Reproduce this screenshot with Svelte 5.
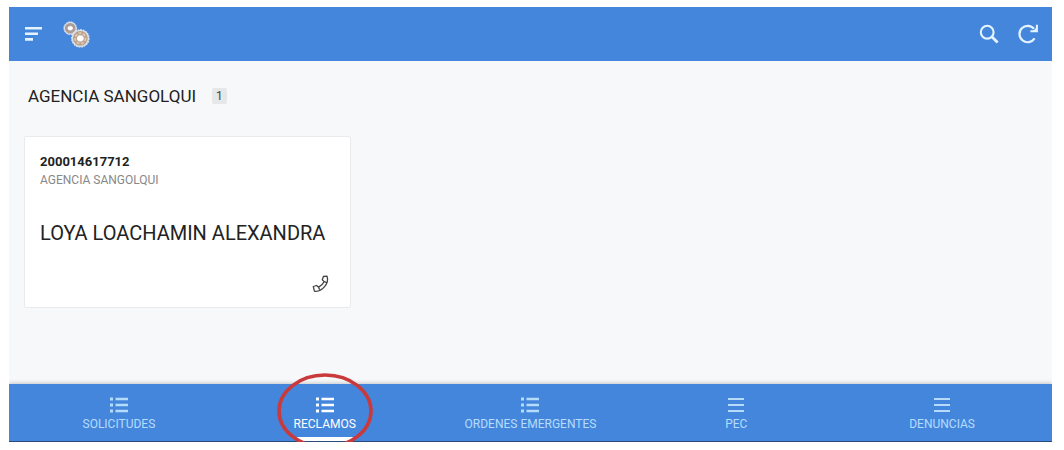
<script>
  let active = $state('reclamos');

  const tabs = [
    { id: 'solicitudes', label: 'SOLICITUDES', bullets: true },
    { id: 'reclamos', label: 'RECLAMOS', bullets: true, marked: true },
    { id: 'ordenes', label: 'ORDENES EMERGENTES', bullets: true },
    { id: 'pec', label: 'PEC', bullets: false },
    { id: 'denuncias', label: 'DENUNCIAS', bullets: false }
  ];

  const claims = [
    { number: '200014617712', agency: 'AGENCIA SANGOLQUI', customer: 'LOYA LOACHAMIN ALEXANDRA' }
  ];
</script>

<div class="app">
  <header class="toolbar">
    <button class="icon-button" aria-label="Menu">
      <svg width="18" height="16" viewBox="0 0 18 16" stroke="currentColor" stroke-width="2.6">
        <path d="M0 2.2h17M0 7.8h13M0 13.4h8" />
      </svg>
    </button>
    <svg class="logo" width="27" height="27" viewBox="0 0 28 28" fill="none">
      <circle cx="7.5" cy="7.5" r="6.6" fill="#d5dce4" />
      <circle cx="7.5" cy="7.5" r="6.6" stroke="#dfe6ee" stroke-width="1" stroke-dasharray="1.6 1" />
      <circle cx="7.5" cy="7.5" r="4" stroke="#ad9c96" stroke-width="3" />
      <circle cx="18" cy="18" r="9" fill="#dde2e7" />
      <circle cx="18" cy="18" r="9" stroke="#dfe6ee" stroke-width="1.2" stroke-dasharray="1.8 1" />
      <circle cx="18" cy="18" r="5.6" stroke="#b9a08c" stroke-width="4.2" />
      <circle cx="18" cy="18" r="5.4" stroke="#e3cbb1" stroke-width="1.8" stroke-dasharray="3 1.6" />
      <ellipse cx="7.5" cy="7.5" rx="2.8" ry="1.9" fill="#fff" />
      <ellipse cx="18" cy="18" rx="3.2" ry="2.8" fill="#fff" />
    </svg>
    <div class="actions">
      <button class="icon-button" aria-label="Search">
        <svg width="20" height="20" viewBox="0 0 20 20" fill="none" stroke="currentColor">
          <circle cx="8.2" cy="8.2" r="6.4" stroke-width="2.1" />
          <path d="M12.6 12.6l6 6" stroke-width="2.8" />
        </svg>
      </button>
      <button class="icon-button" aria-label="Refresh">
        <svg width="22" height="20" viewBox="0 0 22 20" fill="none" stroke="currentColor">
          <path d="M17 4.8A8.2 8.2 0 1 0 17.6 14.4" stroke-width="2.2" />
          <path d="M19.9 0.8V7.2H13.4" stroke-width="2" />
          <path d="M20 3l-4 4h4z" fill="currentColor" stroke="none" />
        </svg>
      </button>
    </div>
  </header>

  <main>
    <h1>AGENCIA SANGOLQUI <span class="count">{claims.length}</span></h1>

    <div class="cards">
      {#each claims as claim (claim.number)}
        <article class="card">
          <strong class="number">{claim.number}</strong>
          <span class="agency">{claim.agency}</span>
          <h2>{claim.customer}</h2>
          <button class="call" aria-label="Call">
            <svg width="18" height="18" viewBox="0 0 18 18" fill="none" stroke="currentColor" stroke-width="1.3" stroke-linejoin="round">
              <path d="M1.3 11.5L4.6 10.5L6.6 12.2C9.3 11 11 9.3 12.2 6.6L10.3 4.7L11.4 1.5L15 1.2C17.6 8.4 9.5 17.6 2.4 16.1Z" />
              <path d="M6.6 12.2l1 2.5M12.2 6.6l2.8 1" />
            </svg>
          </button>
        </article>
      {/each}
    </div>
  </main>

  <nav class="tabs">
    {#each tabs as tab (tab.id)}
      <button class="tab" class:active={active === tab.id} onclick={() => (active = tab.id)}>
        <svg width="18" height="16" viewBox="0 0 18 16" stroke="currentColor" stroke-width="2">
          {#if tab.bullets}
            <path d="M0 2h3M0 8h3M0 14h3" stroke-width="3" />
            <path d="M5.5 2H18M5.5 8H18M5.5 14H18" stroke-width="2.4" />
          {:else}
            <path d="M1 2h16M1 8h16M1 14h16" />
          {/if}
        </svg>
        <span class="label">{tab.label}</span>
        {#if tab.marked}
          <svg class="mark" width="98" height="78" viewBox="0 0 98 78" fill="none">
            <ellipse cx="49" cy="39" rx="46" ry="36" stroke="#c93a3c" stroke-width="3.6" />
          </svg>
        {/if}
      </button>
    {/each}
  </nav>
</div>

<style>
  :global(body) {
    background: #fff;
    font-family: Roboto, sans-serif;
  }

  .app {
    display: flex;
    flex-direction: column;
    min-height: calc(100vh - 15px);
    margin: 7px 12px 8px 9px;
    overflow: hidden;
    background: #f7f8fa;
    color: #222;
  }

  button {
    padding: 0;
    border: none;
    background: none;
    color: inherit;
    font: inherit;
    cursor: pointer;
  }

  svg {
    display: block;
  }

  /* --- Toolbar --- */
  .toolbar {
    display: flex;
    align-items: center;
    gap: 20px;
    height: 54px;
    padding: 0 13px 0 16px;
    background: #4586dd;
    color: #e4f4ff;
  }

  .actions {
    display: flex;
    gap: 18px;
    margin-left: auto;
  }

  /* --- Content --- */
  main {
    flex: 1;
    padding: 24px 15px;
  }

  h1 {
    display: flex;
    align-items: center;
    gap: 16px;
    margin: 0 4px 29px;
    font-size: 17px;
    line-height: 22px;
    font-weight: 400;
  }

  .count {
    padding: 0 4px;
    border-radius: 2px;
    background: #e6e7e9;
    color: #444;
    font-size: 12px;
    line-height: 16px;
  }

  .cards {
    display: grid;
    grid-template-columns: repeat(3, 1fr);
    gap: 16px;
  }

  .card {
    display: flex;
    flex-direction: column;
    padding: 16px 15px 14px;
    border: 1px solid #e8eaee;
    border-radius: 2px;
    background: #fff;
  }

  .number {
    font-size: 13px;
    line-height: 18px;
    font-weight: 700;
  }

  .agency {
    color: #888;
    font-size: 12px;
    line-height: 18px;
  }

  h2 {
    margin: 32px 0 30px;
    font-size: 20px;
    line-height: 24px;
    font-weight: 400;
  }

  .call {
    align-self: flex-end;
    margin-right: 5px;
    color: #444;
  }

  /* --- Bottom tabs --- */
  .tabs {
    display: flex;
    padding: 0 7px;
    border-bottom: 1px solid #284a7c;
    background: #4586dd;
    box-shadow: 0 -1px 4px rgba(0, 0, 0, 0.2);
  }

  .tab {
    position: relative;
    display: flex;
    flex: 1;
    flex-direction: column;
    align-items: center;
    gap: 3px;
    padding: 13px 0 9px;
    color: #b5dcfc;
  }

  .active {
    color: #fff;
  }

  .label {
    font-size: 12px;
    line-height: 16px;
  }

  .active .label::after {
    content: '';
    position: absolute;
    bottom: 0;
    left: 50%;
    width: 58px;
    height: 4px;
    background: #fff;
    transform: translateX(-50%);
  }

  .mark {
    position: absolute;
    top: -12px;
    left: 50%;
    transform: translateX(-50%);
  }
</style>
